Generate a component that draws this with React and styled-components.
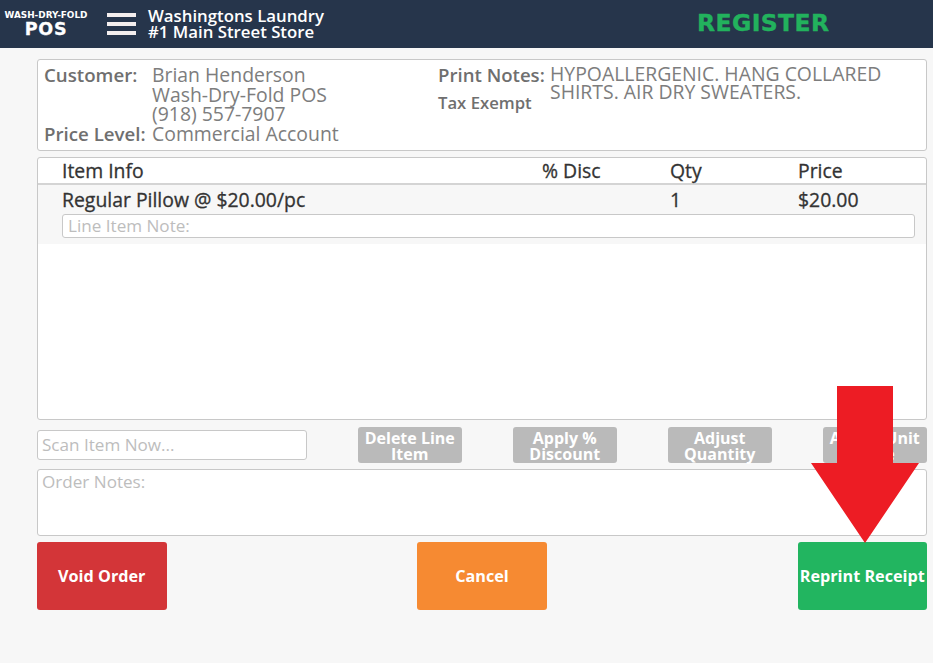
import React from 'react'
import styled, { createGlobalStyle } from 'styled-components'

const GlobalStyle = createGlobalStyle`
    html, body {
        margin: 0;
        padding: 0;
        background: #f7f7f7;
        font-family: 'Open Sans', sans-serif;
    }
    * {
        box-sizing: border-box;
    }
`

const Page = styled.div`
    position: relative;
    width: 933px;
    height: 663px;
    overflow: hidden;
    background: #f7f7f7;
`

const Header = styled.header`
    height: 48px;
    background: #26354b;
    display: flex;
    align-items: center;
    color: white;
`

const Logo = styled.div`
    width: 92px;
    flex-shrink: 0;
    text-align: center;
    font-family: 'DejaVu Sans', sans-serif;
    font-weight: 700;
    white-space: nowrap;
    .small {
        font-size: 8.9px;
        line-height: 10px;
    }
    .big {
        font-size: 17.5px;
        line-height: 18px;
        letter-spacing: 0.7px;
        -webkit-text-stroke: 0.3px white;
    }
`

const Burger = styled.div`
    width: 29px;
    margin-left: 15px;
    display: flex;
    flex-direction: column;
    gap: 5px;
    span {
        height: 4px;
        background: #f4eeee;
    }
`

const StoreName = styled.div`
    margin-left: 12px;
    font-size: 16.8px;
    line-height: 16px;
    font-weight: 600;
    white-space: nowrap;
`

const Title = styled.div`
    position: absolute;
    left: 697px;
    top: 9px;
    font-family: 'DejaVu Sans', sans-serif;
    font-size: 23.5px;
    line-height: 28px;
    font-weight: 700;
    letter-spacing: 0.4px;
    -webkit-text-stroke: 0.4px #22b25d;
    color: #22b25d;
`

const Main = styled.main`
    margin: 11px 6px 0 37px;
    display: flex;
    flex-direction: column;
`

const Panel = styled.section`
    background: white;
    border: 1px solid #c8c8c8;
    border-radius: 3px;
`

const CustomerPanel = styled(Panel)`
    height: 92px;
    padding: 5px 6px 0;
    display: grid;
    grid-template-columns: 394px 1fr;
    color: #7d7d7d;
    font-size: 19.4px;
    line-height: 19.5px;
`

const InfoRow = styled.div`
    display: flex;
`

const Label = styled.div`
    width: 108px;
    flex-shrink: 0;
    font-size: 18.7px;
    font-weight: 600;
    color: #6f6f6f;
`

const PrintNotes = styled.div`
    display: flex;
    line-height: 17.5px;
`

const PrintLabel = styled.div`
    width: 112px;
    flex-shrink: 0;
    font-size: 18.6px;
    font-weight: 600;
    color: #6f6f6f;
    line-height: 19.5px;
    span {
        display: block;
        margin-top: 8px;
        font-size: 16.7px;
    }
`

const ItemsPanel = styled(Panel)`
    margin-top: 6px;
    height: 263px;
`

const ItemGrid = styled.div`
    display: grid;
    grid-template-columns: 480px 128px 128px 1fr;
    padding-left: 24px;
    color: #333;
    font-size: 19.4px;
    -webkit-text-stroke: 0.3px #333;
`

const ItemHead = styled(ItemGrid)`
    height: 27px;
    line-height: 25px;
    border-bottom: 2px solid #d4d4d4;
`

const ItemBlock = styled.div`
    height: 59px;
    background: #f7f7f7;
    padding-top: 2px;
`

const ItemRow = styled(ItemGrid)`
    line-height: 25px;
`

const NoteInput = styled.div`
    margin: 2px 11px 0 24px;
    height: 24px;
    background: white;
    border: 1px solid #c8c8c8;
    border-radius: 3px;
    padding-left: 5px;
    color: #bdbdbd;
    font-size: 17.1px;
    line-height: 22px;
`

const ActionRow = styled.div`
    margin-top: 7px;
    height: 36px;
    display: flex;
    align-items: center;
`

const ScanInput = styled.div`
    width: 270px;
    flex-shrink: 0;
    height: 30px;
    background: white;
    border: 1px solid #c8c8c8;
    border-radius: 3px;
    padding-left: 4px;
    color: #bdbdbd;
    font-size: 17.1px;
    line-height: 28px;
`

const ActionButtons = styled.div`
    margin-left: 51px;
    display: flex;
    gap: 51.5px;
`

const GreyButton = styled.div`
    width: 103.5px;
    height: 36px;
    border-radius: 3px;
    background: #bababa;
    color: white;
    font-size: 16px;
    font-weight: 700;
    line-height: 16px;
    text-align: center;
    padding-top: 3px;
`

const OrderNotes = styled(Panel)`
    margin-top: 6px;
    height: 67px;
    padding-left: 4px;
    color: #bdbdbd;
    font-size: 17.1px;
    line-height: 24px;
`

const Footer = styled.div`
    margin-top: 6px;
    display: flex;
    justify-content: space-between;
`

const BigButton = styled.div`
    width: 129.5px;
    height: 68px;
    border-radius: 3px;
    background: ${({ color }) => color};
    color: white;
    font-size: 16.2px;
    font-weight: 700;
    white-space: nowrap;
    display: flex;
    align-items: center;
    justify-content: center;
`

const Arrow = styled.svg`
    position: absolute;
    left: 810px;
    top: 385px;
`

export default function App() {
    return (
        <Page>
            <GlobalStyle />
            <Header>
                <Logo>
                    <div className='small'>WASH-DRY-FOLD</div>
                    <div className='big'>POS</div>
                </Logo>
                <Burger><span /><span /><span /></Burger>
                <StoreName>
                    <div>Washingtons Laundry</div>
                    <div>#1 Main Street Store</div>
                </StoreName>
                <Title>REGISTER</Title>
            </Header>
            <Main>
                <CustomerPanel>
                    <div>
                        <InfoRow>
                            <Label>Customer:</Label>
                            <div>Brian Henderson<br />Wash-Dry-Fold POS<br />(918) 557-7907</div>
                        </InfoRow>
                        <InfoRow>
                            <Label>Price Level:</Label>
                            <div>Commercial Account</div>
                        </InfoRow>
                    </div>
                    <PrintNotes>
                        <PrintLabel>Print Notes:<span>Tax Exempt</span></PrintLabel>
                        <div>HYPOALLERGENIC. HANG COLLARED SHIRTS. AIR DRY SWEATERS.</div>
                    </PrintNotes>
                </CustomerPanel>
                <ItemsPanel>
                    <ItemHead>
                        <div>Item Info</div>
                        <div>% Disc</div>
                        <div>Qty</div>
                        <div>Price</div>
                    </ItemHead>
                    <ItemBlock>
                        <ItemRow>
                            <div>Regular Pillow @ $20.00/pc</div>
                            <div />
                            <div>1</div>
                            <div>$20.00</div>
                        </ItemRow>
                        <NoteInput>Line Item Note:</NoteInput>
                    </ItemBlock>
                </ItemsPanel>
                <ActionRow>
                    <ScanInput>Scan Item Now...</ScanInput>
                    <ActionButtons>
                        <GreyButton>Delete Line Item</GreyButton>
                        <GreyButton>Apply % Discount</GreyButton>
                        <GreyButton>Adjust Quantity</GreyButton>
                        <GreyButton>Adjust Unit Price</GreyButton>
                    </ActionButtons>
                </ActionRow>
                <OrderNotes>Order Notes:</OrderNotes>
                <Footer>
                    <BigButton color='#d33538'>Void Order</BigButton>
                    <BigButton color='#f68a32'>Cancel</BigButton>
                    <BigButton color='#22b560'>Reprint Receipt</BigButton>
                </Footer>
            </Main>
            <Arrow width='110' height='160' viewBox='0 0 110 160'>
                <path d='M27 1 H83 V78 H109 L55 158 L1 78 H27 Z' fill='#ed1c24' />
            </Arrow>
        </Page>
    )
}
